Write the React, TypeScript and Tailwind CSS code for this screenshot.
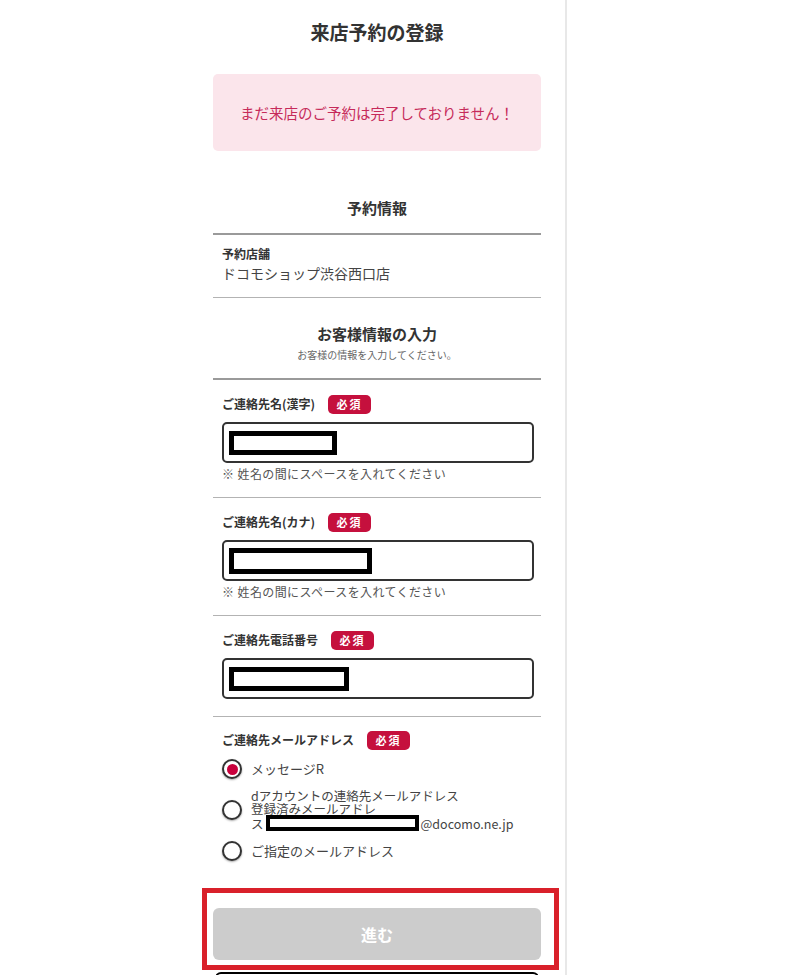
import React from "react";

const JP = { fontFamily: '"Noto Sans CJK JP", "Noto Sans", sans-serif' };

// red "必須" chip next to a label
const Required = () => (
  <span className="ml-[13px] inline-flex h-[19px] w-[43px] items-center justify-center rounded-[5px] bg-[#c5103d] text-[11px] font-bold leading-none tracking-[2px] text-white">
    必須
  </span>
);

// blacked-out value inside an input
const Redacted = ({ w, h }: { w: number; h: number }) => (
  <div className="border-[5px] border-black bg-white" style={{ width: w, height: h }} />
);

interface FieldProps {
  label: string;
  redactW: number;
  redactH: number;
  hint?: boolean;
  last?: boolean;
}

const TextField = ({ label, redactW, redactH, hint, last }: FieldProps) => (
  <div className={`px-[9px] pt-[14px] ${last ? "pb-[17px]" : "pb-[15px]"} border-b border-[#b3b3b3]`}>
    <div className="flex h-[20px] items-center text-[12px] font-bold text-[#333]">
      <span>{label}</span>
      <Required />
    </div>
    <div className="mt-[8px] flex h-[41px] w-[312px] items-center rounded-[5px] border-2 border-[#333] pl-[5px]">
      <Redacted w={redactW} h={redactH} />
    </div>
    {hint && (
      <div className="mt-[3px] h-[16px] text-[12px] leading-[16px] tracking-[0.4px] text-[#555]">
        ※ 姓名の間にスペースを入れてください
      </div>
    )}
  </div>
);

const Radio = ({ checked }: { checked?: boolean }) => (
  <span className="flex h-[20px] w-[20px] shrink-0 items-center justify-center rounded-full border-2 border-[#333] bg-white shadow-[0_1px_2px_rgba(0,0,0,0.35)]">
    {checked && <span className="h-[11px] w-[11px] rounded-full bg-[#c8003c]" />}
  </span>
);

export default function App() {
  return (
    <div className="h-[975px] overflow-hidden bg-white" style={JP}>
      <div className="flex h-full w-[567px] border-r-2 border-[#e8e8e8] pl-[213px]">
        <div className="w-[328px]">
          {/* page title */}
          <div className="flex h-[64px] items-center justify-center text-[19px] font-bold text-[#333]">
            来店予約の登録
          </div>

          {/* warning box */}
          <div className="mt-[10px] flex h-[77px] items-center justify-center rounded-[5px] bg-[#fbe5eb] text-[14.5px] text-[#c62a5a]">
            まだ来店のご予約は完了しておりません！
          </div>

          {/* reservation info */}
          <div className="mt-[45px] mb-[13px] text-center text-[15px] font-bold leading-[24px] text-[#333]">
            予約情報
          </div>
          <div className="h-[2px] bg-[#9a9a9a]" />
          <div className="px-[9px] pt-[10px] pb-[14px] border-b border-[#b3b3b3]">
            <div className="text-[12px] font-bold leading-[18px] text-[#333]">予約店舗</div>
            <div className="text-[14px] leading-[20px] text-[#444]">ドコモショップ渋谷西口店</div>
          </div>

          {/* customer info heading */}
          <div className="mt-[24px] text-center text-[15px] font-bold leading-[24px] text-[#333]">
            お客様情報の入力
          </div>
          <div className="mt-[2px] mb-[16px] text-center text-[10px] leading-[14px] text-[#666]">
            お客様の情報を入力してください。
          </div>
          <div className="h-[2px] bg-[#9a9a9a]" />

          <TextField label="ご連絡先名(漢字)" redactW={108} redactH={24} hint />
          <TextField label="ご連絡先名(カナ)" redactW={143} redactH={26} hint />
          <TextField label="ご連絡先電話番号" redactW={120} redactH={24} last />

          {/* email choice */}
          <div className="px-[9px] pt-[13px]">
            <div className="flex h-[20px] items-center text-[12px] font-bold text-[#333]">
              <span>ご連絡先メールアドレス</span>
              <Required />
            </div>

            <div className="mt-[8px] flex h-[22px] items-center gap-[9px] text-[13px] text-[#444]">
              <Radio checked />
              <span>メッセージR</span>
            </div>

            <div className="mt-[9px] flex items-center gap-[9px] text-[12.5px] leading-[13px] text-[#444]">
              <Radio />
              <div>
                <div>dアカウントの連絡先メールアドレス</div>
                <div>登録済みメールアドレ</div>
                <div className="flex items-center">
                  <span>ス</span>
                  <span className="mx-[2px] inline-block h-[16px] w-[153px] border-[4px] border-black bg-white" />
                  <span>@docomo.ne.jp</span>
                </div>
              </div>
            </div>

            <div className="mt-[9px] flex h-[22px] items-center gap-[9px] text-[13px] text-[#444]">
              <Radio />
              <span>ご指定のメールアドレス</span>
            </div>
          </div>

          {/* submit, with the red highlight frame drawn over it */}
          <div className="relative mt-[46px]">
            <div className="flex h-[52px] items-center justify-center rounded-[6px] bg-[#cccccc] text-[16px] font-bold text-white">
              進む
            </div>
            <div className="pointer-events-none absolute -top-[20px] -bottom-[10px] -left-[11px] -right-[18px] border-[5px] border-[#d9202a]" />
          </div>

          {/* next button peeking in at the bottom edge */}
          <div className="mx-[2px] mt-[12px] h-[40px] rounded-[6px] border-2 border-black" />
        </div>
      </div>
    </div>
  );
}
